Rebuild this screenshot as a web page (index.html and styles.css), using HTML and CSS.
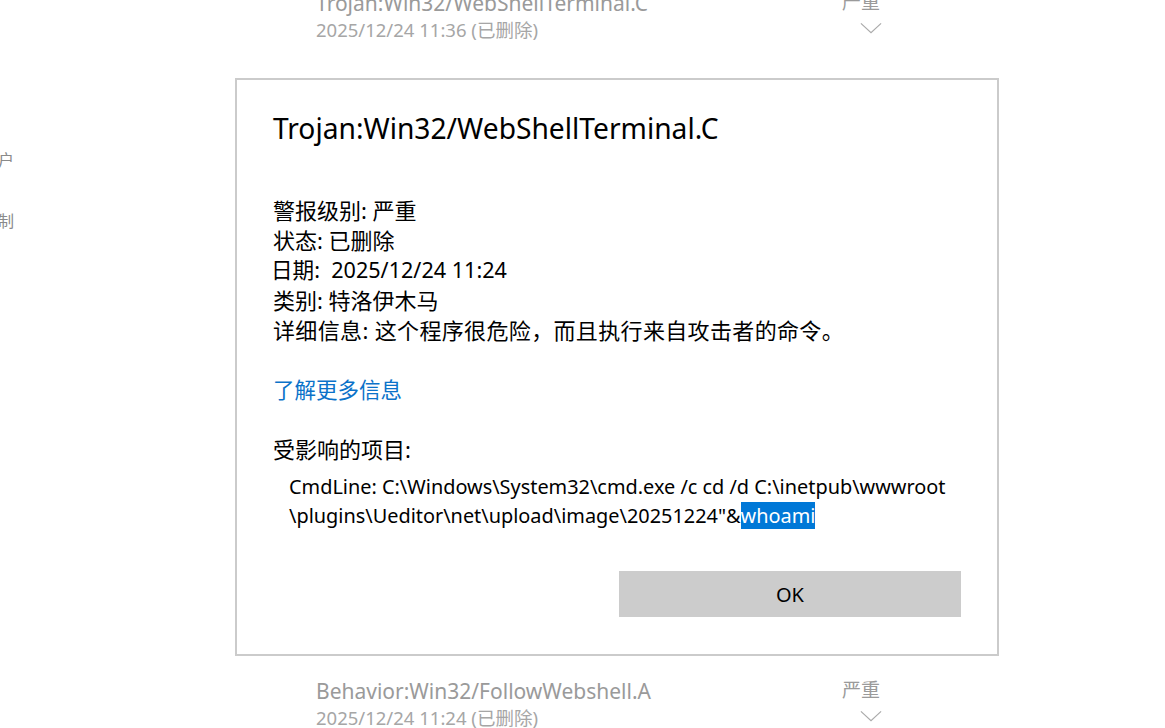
FILE: index.html
```html
<!DOCTYPE html>
<html lang="zh-CN">
<head>
<meta charset="utf-8">
<link rel="stylesheet" href="styles.css">
</head>
<body>
<div class="page">
  <nav class="nav">
    <div class="nav-item">账户</div>
    <div class="nav-item">控制</div>
  </nav>
  <main class="list">
    <div class="row">
      <div class="row-text"><div class="row-title">Trojan:Win32/WebShellTerminal.C</div><div class="row-date">2025/12/24 11:36 (已删除)</div></div>
      <div class="row-side"><div class="sev">严重</div><svg class="chev" viewBox="0 0 24 12"><path d="M1 1 L12 11 L23 1" /></svg></div>
    </div>
    <div class="row">
      <div class="row-text"><div class="row-title">Trojan:Win32/WebShellTerminal.C</div><div class="row-date">2025/12/24 11:32 (已删除)</div></div>
      <div class="row-side"><div class="sev">严重</div><svg class="chev" viewBox="0 0 24 12"><path d="M1 1 L12 11 L23 1" /></svg></div>
    </div>
    <div class="row">
      <div class="row-text"><div class="row-title">Trojan:Win32/WebShellTerminal.C</div><div class="row-date">2025/12/24 11:30 (已删除)</div></div>
      <div class="row-side"><div class="sev">严重</div><svg class="chev" viewBox="0 0 24 12"><path d="M1 1 L12 11 L23 1" /></svg></div>
    </div>
    <div class="row">
      <div class="row-text"><div class="row-title">Trojan:Win32/WebShellTerminal.C</div><div class="row-date">2025/12/24 11:28 (已删除)</div></div>
      <div class="row-side"><div class="sev">严重</div><svg class="chev" viewBox="0 0 24 12"><path d="M1 1 L12 11 L23 1" /></svg></div>
    </div>
    <div class="row">
      <div class="row-text"><div class="row-title">Trojan:Win32/WebShellTerminal.C</div><div class="row-date">2025/12/24 11:26 (已删除)</div></div>
      <div class="row-side"><div class="sev">严重</div><svg class="chev" viewBox="0 0 24 12"><path d="M1 1 L12 11 L23 1" /></svg></div>
    </div>
    <div class="row">
      <div class="row-text"><div class="row-title">Trojan:Win32/WebShellTerminal.C</div><div class="row-date">2025/12/24 11:25 (已删除)</div></div>
      <div class="row-side"><div class="sev">严重</div><svg class="chev" viewBox="0 0 24 12"><path d="M1 1 L12 11 L23 1" /></svg></div>
    </div>
    <div class="row">
      <div class="row-text"><div class="row-title">Trojan:Win32/WebShellTerminal.C</div><div class="row-date">2025/12/24 11:24 (已删除)</div></div>
      <div class="row-side"><div class="sev">严重</div><svg class="chev" viewBox="0 0 24 12"><path d="M1 1 L12 11 L23 1" /></svg></div>
    </div>
    <div class="row">
      <div class="row-text"><div class="row-title">Trojan:Win32/WebShellTerminal.C</div><div class="row-date">2025/12/24 11:24 (已删除)</div></div>
      <div class="row-side"><div class="sev">严重</div><svg class="chev" viewBox="0 0 24 12"><path d="M1 1 L12 11 L23 1" /></svg></div>
    </div>
    <div class="row">
      <div class="row-text"><div class="row-title">Behavior:Win32/FollowWebshell.A</div><div class="row-date">2025/12/24 11:24 (已删除)</div></div>
      <div class="row-side"><div class="sev">严重</div><svg class="chev" viewBox="0 0 24 12"><path d="M1 1 L12 11 L23 1" /></svg></div>
    </div>
  </main>

  <div class="dialog">
    <h1 class="d-title">Trojan:Win32/WebShellTerminal.C</h1>
    <div class="d-info">
      <div>警报级别: 严重</div>
      <div>状态: 已删除</div>
      <div class="shift">日期:&nbsp; 2025/12/24 11:24</div>
      <div>类别: 特洛伊木马</div>
      <div class="wide">详细信息: 这个程序很危险，而且执行来自攻击者的命令。</div>
    </div>
    <a class="d-link" href="#">了解更多信息</a>
    <div class="d-head">受影响的项目:</div>
    <div class="d-cmd">CmdLine: C:\Windows\System32\cmd.exe /c cd /d C:\inetpub\wwwroot<br>\plugins\Ueditor\net\upload\image\20251224"&amp;<span class="sel">whoami</span></div>
    <div class="d-actions"><button class="ok">OK</button></div>
  </div>
</div>
</body>
</html>
```

FILE: styles.css
```css
* { box-sizing: border-box; }
html, body { margin: 0; padding: 0; background: #fff; }
body {
  font-family: "Noto Sans", "Noto Sans CJK SC", sans-serif;
  color: #000;
  width: 1165px;
  height: 728px;
  overflow: hidden;
}
.page {
  position: relative;
  display: flex;
  align-items: flex-start;
  height: 728px;
}
.nav {
  width: 14px;
  flex: none;
  overflow: hidden;
  padding-top: 146px;
  display: flex;
  flex-direction: column;
  gap: 33px;
}
.nav-item {
  display: flex;
  justify-content: flex-end;
  white-space: nowrap;
  font-size: 16px;
  line-height: 28px;
  color: #8a8a8a;
}
.list {
  margin-left: 302px;
  margin-top: -10px;
  width: 566px;
  flex: none;
  display: flex;
  flex-direction: column;
}
.row {
  flex: none;
  display: flex;
  justify-content: space-between;
  height: 86px;
}
.row-title {
  font-size: 21px;
  line-height: 26px;
  color: #9a9a9a;
  white-space: nowrap;
}
.row-date {
  font-size: 18.5px;
  line-height: 28px;
  color: #a6a6a6;
  white-space: nowrap;
}
.row-side {
  width: 40px;
  display: flex;
  flex-direction: column;
  align-items: flex-end;
}
.sev {
  font-size: 19px;
  line-height: 24px;
  color: #9a9a9a;
  padding-right: 2px;
}
.chev {
  width: 22px;
  height: 12px;
  margin-top: 8px;
  fill: none;
  stroke: #aaa;
  stroke-width: 1.3;
}
.dialog {
  position: absolute;
  left: 235px;
  top: 78px;
  width: 764px;
  height: 578px;
  background: #fff;
  border: 2px solid #cbcbcb;
  padding: 29px 36px 37px 36px;
  display: flex;
  flex-direction: column;
}
.d-title {
  margin: 0;
  font-weight: normal;
  font-size: 28.2px;
  line-height: 38px;
}
.d-info {
  margin-top: 48px;
  font-size: 22px;
  line-height: 30px;
}
.shift { margin-left: -2px; font-size: 21.6px; }
.wide { letter-spacing: 0.35px; }
.d-link {
  margin-top: 30px;
  font-size: 21.5px;
  line-height: 30px;
  color: #0b72c9;
  text-decoration: none;
  align-self: flex-start;
}
.d-head {
  margin-top: 29px;
  font-size: 22px;
  line-height: 30px;
}
.d-cmd {
  margin-top: 8px;
  padding-left: 16px;
  font-size: 19.9px;
  line-height: 29px;
  white-space: nowrap;
}
.sel {
  background: #0078d7;
  color: #fff;
}
.d-actions {
  margin-top: auto;
  display: flex;
  justify-content: flex-end;
}
.ok {
  width: 342px;
  height: 46px;
  border: none;
  background: #cccccc;
  font-family: "Noto Sans", sans-serif;
  font-size: 20px;
  color: #000;
  padding: 0;
}
```
